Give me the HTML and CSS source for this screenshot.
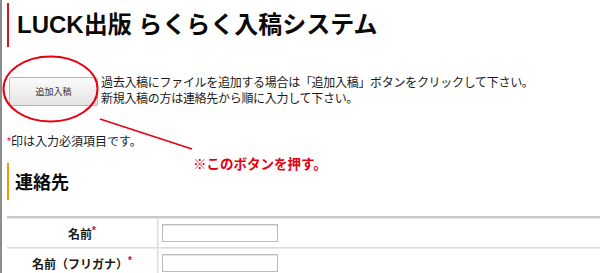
FILE: index.html
```html
<!DOCTYPE html>
<html lang="ja">
<head>
  <meta charset="UTF-8" />
  <title>LUCK出版 らくらく入稿システム</title>
  <link rel="stylesheet" href="styles.css">
</head>
<body>
  <div class="page">
    <h1 class="title">LUCK出版 らくらく入稿システム</h1>

    <div class="intro">
      <button type="button" class="add-btn">追加入稿</button>
      <p class="intro-text">過去入稿にファイルを追加する場合は「追加入稿」ボタンをクリックして下さい。<br>新規入稿の方は連絡先から順に入力して下さい。</p>
    </div>

    <p class="required-note"><span class="req">*</span>印は入力必須項目です。</p>

    <h2 class="section-title">連絡先</h2>

    <table class="form-table">
      <tr>
        <th>名前<span class="req">*</span></th>
        <td><input type="text" class="field" /></td>
      </tr>
      <tr>
        <th>名前（フリガナ）<span class="req">*</span></th>
        <td><input type="text" class="field" /></td>
      </tr>
    </table>

    <!-- annotation drawn over the screenshot -->
    <svg class="marks" width="600" height="273" viewBox="0 0 600 273">
      <ellipse cx="50.5" cy="89" rx="47" ry="32.5" fill="none" stroke="#e60012" stroke-width="2" />
      <line x1="100" y1="119" x2="192" y2="149" stroke="#e60012" stroke-width="1.6" />
    </svg>
    <p class="mark-note">※このボタンを押す。</p>
  </div>
</body>
</html>
```

FILE: styles.css
```css
body {
  margin: 0;
  background: #fff;
  color: #1a1a1a;
  font-family: "Liberation Sans", "Noto Sans CJK JP", sans-serif;
  font-size: 12px;
}
.page {
  position: relative;
  height: 273px;
  overflow: hidden;
  border-left: 2px solid #8c8c8c;
  padding-left: 5px;
}
.title {
  margin: 3px 0 0;
  height: 44px;
  line-height: 44px;
  border-left: 2px solid #d7141a;
  padding-left: 8px;
  font-size: 24px;
  font-weight: bold;
  color: #0a0a0a;
  white-space: nowrap;
}
.intro {
  display: flex;
  align-items: center;
  gap: 3px;
  margin-top: 28px;
}
.add-btn {
  margin-left: 2px;
  width: 89px;
  height: 29px;
  padding: 0;
  border: 1px solid #b4b4b4;
  border-radius: 2px;
  background: linear-gradient(#fbfbfb, #e4e4e4);
  color: #333;
  font-family: "Noto Sans CJK JP", sans-serif;
  font-size: 9px;
}
.intro-text {
  margin: 0;
  line-height: 16px;
  letter-spacing: -0.3px;
  white-space: nowrap;
}
.required-note {
  margin: 27px 0 0;
  line-height: 16px;
}
.req {
  color: #e60012;
  font-size: 10px;
  vertical-align: top;
}
.section-title {
  margin: 13px 0 0;
  height: 37px;
  line-height: 40px;
  border-left: 2px solid #f39800;
  padding-left: 6px;
  font-size: 18px;
  font-weight: bold;
  color: #0a0a0a;
}
.form-table {
  margin-top: 16px;
  width: 600px;
  border-collapse: separate;
  border-spacing: 0;
  border-top: 2px solid #cacaca;
}
.form-table th,
.form-table td {
  padding: 5px 3px;
  border-top: 1px solid #e8e8e8;
  border-bottom: 1px solid #dcdcdc;
  vertical-align: middle;
}
.form-table th {
  width: 144px;
  text-align: center;
  font-weight: bold;
  border-right: 1px solid #dcdcdc;
}
.form-table td {
  border-left: 1px solid #ececec;
}
.field {
  display: block;
  width: 116px;
  height: 18px;
  box-sizing: border-box;
  margin: 0;
  border: 1px solid #bdbdbd;
  box-shadow: inset 0 1px 1px #e2e2e2;
}
.marks {
  position: absolute;
  top: 0;
  left: -2px;
  pointer-events: none;
}
.mark-note {
  position: absolute;
  top: 154px;
  left: 191px;
  margin: 0;
  line-height: 18px;
  color: #e60012;
  font-family: "Noto Sans CJK JP", sans-serif;
  font-size: 13.5px;
  font-weight: bold;
}
```
